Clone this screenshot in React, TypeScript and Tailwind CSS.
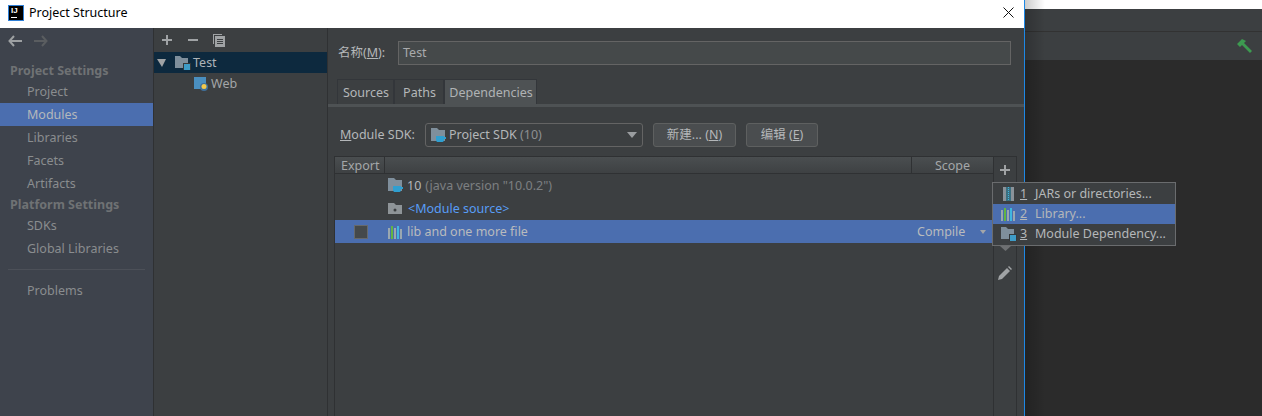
import React from 'react'

const ModuleFolderIcon = () => (
  <svg width="16" height="14" viewBox="0 0 16 14" className="shrink-0">
    <path d="M0 0h5l2 2h6v10H0z" fill="#7f8f9c" />
    <rect x="8" y="7" width="8" height="7" fill="#35383a" />
    <rect x="9" y="8" width="6" height="6" fill="#3e9cc7" />
  </svg>
)

const SdkIcon = () => (
  <svg width="16" height="15" viewBox="0 0 16 15" className="shrink-0">
    <path d="M0 0h6l2 2h6v11H0z" fill="#7f8f9c" />
    <path d="M5 8h8v4c0 1.500-1 2-2 2H7c-1 0-2-.5-2-2z" fill="#2f9fd0" />
    <path d="M13 9h2v2h-2z" fill="#2f9fd0" />
  </svg>
)

const LibraryIcon = () => (
  <svg width="15" height="14" viewBox="0 0 15 14" className="shrink-0">
    <rect x="0" y="3" width="2" height="11" fill="#9aa7b0" />
    <rect x="3" y="1" width="2" height="13" fill="#62b543" />
    <rect x="6" y="3" width="2" height="11" fill="#9aa7b0" />
    <rect x="9" y="1" width="2" height="13" fill="#40b6e0" />
    <rect x="12" y="4" width="2" height="10" fill="#9aa7b0" />
  </svg>
)

const Caret = ({ className = '' }: { className?: string }) => (
  <span className={`inline-block w-0 h-0 border-l-transparent border-r-transparent ${className}`} />
)

const NavItem = ({ label, active }: { label: string; active?: boolean }) => (
  <div className={`h-[23px] flex items-center pl-[27px] pt-[1px] text-[#8a8d8f] ${active ? 'bg-[#4b6eaf] text-[#b4b8bb]' : ''}`}>{label}</div>
)

const NavHead = ({ label, h }: { label: string; h: string }) => (
  <div className={`${h} flex items-center pl-[10px] font-bold text-[#6f7274]`}>{label}</div>
)

const Sidebar = () => (
  <div className="w-[153px] shrink-0 bg-[#3e434c] border-r border-[#2f3133] box-content">
    <div className="h-8 pb-[6px] flex items-center gap-[12px] pl-2">
      <svg width="14" height="12" viewBox="0 0 14 12"><path d="M6 1L1.500 6 6 11M2 6h12" fill="none" stroke="#9da0a2" strokeWidth="2" /></svg>
      <svg width="14" height="12" viewBox="0 0 14 12"><path d="M8 1l4.500 5L8 11M12 6H0" fill="none" stroke="#5a5d60" strokeWidth="2" /></svg>
    </div>
    <NavHead label="Project Settings" h="h-5 pt-[2px]" />
    <NavItem label="Project" />
    <NavItem label="Modules" active />
    <NavItem label="Libraries" />
    <NavItem label="Facets" />
    <NavItem label="Artifacts" />
    <NavHead label="Platform Settings" h="h-[19px] pt-[1px]" />
    <NavItem label="SDKs" />
    <NavItem label="Global Libraries" />
    <div className="h-[19px] flex items-center px-2">
      <div className="h-px w-full bg-[#4c5058]" />
    </div>
    <NavItem label="Problems" />
  </div>
)

const ModuleTree = () => (
  <div className="w-[173px] shrink-0 bg-[#3c3f41] border-r border-[#2f3133] box-content text-[#a9b7c6]">
    <div className="h-6 flex items-center gap-[14px] pl-[7px]">
      <svg width="12" height="12" viewBox="0 0 12 12"><path d="M5 1h2v4h4v2H7v4H5V7H1V5h4z" fill="#a0a3a5" /></svg>
      <svg width="12" height="12" viewBox="0 0 12 12"><path d="M1 5h10v2H1z" fill="#a0a3a5" /></svg>
      <svg width="12" height="13" viewBox="0 0 12 13"><path d="M0 0h9v1H1v9H0z" fill="#a0a3a5" /><path d="M2 2h10v11H2z" fill="#a0a3a5" /><path d="M4 5h6v1H4zM4 7h6v1H4zM4 9h6v1H4z" fill="#3c3f41" /></svg>
    </div>
    <div className="h-[21px] bg-[#0d293e] flex items-center pl-[3px] text-[#aeb4b8]">
      <Caret className="border-t-[8px] border-t-[#a0a3a5] border-l-[5px] border-r-[4px]" />
      <span className="ml-[9px] flex"><ModuleFolderIcon /></span>
      <span className="ml-[2px] pt-[2px]">Test</span>
    </div>
    <div className="h-[21px] flex items-center pl-[40px] text-[#a3a6a8]">
      <svg width="14" height="14" viewBox="0 0 14 14" className="shrink-0">
        <rect x="0" y="0" width="12" height="12" fill="#4a8fc0" />
        <circle cx="10" cy="10" r="4" fill="#3f6f9a" />
        <circle cx="10" cy="9.500" r="2.500" fill="#f2c94c" />
      </svg>
      <span className="ml-[3px] pt-[2px]">Web</span>
    </div>
  </div>
)

const Tab = ({ label, w, active }: { label: string; w: string; active?: boolean }) => (
  <div className={`${w} h-[25px] flex items-center justify-center pt-[2px] pl-[1px] border-t border-r border-l border-[#33363a] ${active ? 'bg-[#4e5254] text-[#b0b3b5]' : 'bg-[#3c3f41] text-[#b4b7b9]'}`}>{label}</div>
)

const DialogButton = ({ w, children }: { w: string; children: React.ReactNode }) => (
  <div className={`${w} h-6 flex items-center justify-center rounded-[3px] border border-[#5e6060] bg-[#4a4d4f] text-[#b4b7b9]`}>{children}</div>
)

const Row = ({ children, selected }: { children: React.ReactNode; selected?: boolean }) => (
  <div className={`h-[23px] flex items-center ${selected ? 'bg-[#4b6eaf]' : ''}`}>{children}</div>
)

const Dependencies = () => (
  <div className="flex-1 min-w-0 flex flex-col bg-[#3c3f41] text-[#afb1b3]">
    <div className="h-6 mt-[13px] shrink-0 flex items-center pl-[10px] pr-[13px]">
      <span className="w-[60px] text-[#b4b7b9]">名称(<span className="underline">M</span>):</span>
      <div className="flex-1 h-6 flex items-center pl-[4px] border border-[#646464] bg-[#45494a] text-[#a9abad]">Test</div>
    </div>
    <div className="flex pl-[9px] h-[25px] mt-[14px] shrink-0">
      <Tab label="Sources" w="w-[57px]" />
      <Tab label="Paths" w="w-[50px]" />
      <Tab label="Dependencies" w="w-[93px]" active />
    </div>
    <div className="h-[3px] shrink-0 bg-[#4e5254]" />
    <div className="h-[24px] mt-[16px] shrink-0 flex items-center pl-3">
      <span className="w-[85px] text-[#b4b7b9]"><span className="underline">M</span>odule SDK:</span>
      <div className="w-[218px] h-6 flex items-center pl-[5px] pr-[5px] rounded-[3px] border border-[#646464] bg-[#3c3f41]">
        <SdkIcon />
        <span className="ml-[2px] flex-1 text-[#b4b7b9]">Project SDK <span className="text-[#8c8f91]">(10)</span></span>
        <Caret className="border-t-[6px] border-t-[#9a9da0] border-l-[5px] border-r-[5px]" />
      </div>
      <div className="flex gap-[10px] ml-[10px]">
        <DialogButton w="w-[83px]">新建... (<span className="underline">N</span>)</DialogButton>
        <DialogButton w="w-[72px]">编辑 (<span className="underline">E</span>)</DialogButton>
      </div>
    </div>
    <div className="flex-1 mt-[9px] ml-[6px] mr-[7px] flex min-h-0 border-l border-t border-[#2f3133]">
      <div className="flex-1 min-w-0 flex flex-col">
        <div className="h-4 shrink-0 flex items-center bg-gradient-to-b from-[#4a4e50] to-[#3e4143] border-b border-[#2f3133] text-[#a4a7a9] box-content">
          <div className="w-[50px] h-full flex items-center pl-[6px] pt-[3px] border-r border-[#2f3133]">Export</div>
          <div className="flex-1 h-full border-r border-[#2f3133]" />
          <div className="w-[81px] text-center pt-[3px]">Scope</div>
        </div>
        <Row>
          <span className="ml-[53px]"><SdkIcon /></span>
          <span className="ml-[3px] pt-[1px] text-[#b4b7b9]">10</span>
          <span className="ml-1 pt-[1px] text-[#7c7f81]">(java version "10.0.2")</span>
        </Row>
        <Row>
          <span className="ml-[53px] flex">
            <svg width="15" height="13" viewBox="0 0 15 13"><path d="M0 1h6l2 2h6v9H0z" fill="#8e9498" /><circle cx="7" cy="8" r="1.500" fill="#3c3f41" /></svg>
          </span>
          <span className="ml-[5px] pt-[2px] text-[#589df6]">&lt;Module source&gt;</span>
        </Row>
        <Row selected>
          <span className="ml-[19px] w-[14px] h-[14px] bg-[#45494a] border border-[#66696b]" />
          <span className="ml-[20px] flex"><LibraryIcon /></span>
          <span className="ml-[4px] pt-[1px] flex-1 text-[#b9bbbd]">lib and one more file</span>
          <span className="w-[81px] pl-[5px] flex items-center text-[#b9bbbd]">
            <span className="w-[63px] pt-[1px]">Compile</span>
            <Caret className="border-t-[#a3a6a9] border-l-[3px] border-r-[3px] border-t-[4px]" />
          </span>
        </Row>
      </div>
      <div className="w-[24px] shrink-0 border-l border-r border-[#2f3133] flex flex-col items-center">
        <svg width="12" height="12" viewBox="0 0 12 12" className="mt-[7px]"><path d="M5 1h2v4h4v2H7v4H5V7H1V5h4z" fill="#a0a3a5" /></svg>
        <svg width="11" height="5" viewBox="0 0 11 5" className="mt-[70px]"><path d="M0 0h11L5.500 5z" fill="#6e7072" /></svg>
        <svg width="16" height="16" viewBox="0 0 16 16" className="mt-[14px]"><path d="M1 15l1-4 8-8 3 3-8 8zM11 2l1-1 3 3-1 1z" fill="#a0a3a5" /></svg>
      </div>
    </div>
  </div>
)

const PopupRow = ({ n, label, icon, pad, active }: { n: string; label: string; icon: React.ReactNode; pad: string; active?: boolean }) => (
  <div className={`h-[20px] flex items-center ${active ? 'bg-[#4b6eaf]' : ''}`}>
    <span className={`w-[27px] flex ${pad}`}>{icon}</span>
    <span className="underline w-[15px]">{n}</span>
    <span>{label}</span>
  </div>
)

const Popup = () => (
  <div className="absolute left-[992px] top-[182px] w-[184px] pt-[1px] pb-[1px] border border-[#6a6c6e] bg-[#3c3f41] text-[#b4b7b9]">
    <PopupRow
      n="1"
      label="JARs or directories..."
      pad="pl-[10px]"
      icon={
        <svg width="11" height="14" viewBox="0 0 11 14">
          <rect width="11" height="14" fill="#8a9299" />
          <rect x="3" width="5" height="14" fill="#3b6f80" />
          <path d="M5 0h1v1H5zM5 2h1v1H5zM5 4h1v1H5zM5 6h1v1H5zM5 8h1v1H5zM5 10h1v1H5zM5 12h1v1H5z" fill="#40b6e0" />
        </svg>
      }
    />
    <PopupRow n="2" label="Library..." pad="pl-[8px]" icon={<LibraryIcon />} active />
    <PopupRow n="3" label="Module Dependency..." pad="pl-[8px]" icon={<ModuleFolderIcon />} />
  </div>
)

const BackgroundWindow = () => (
  <div className="relative flex-1 min-w-0 bg-[#2b2b2b] flex flex-col">
    <div className="h-[9px] bg-white" />
    <div className="h-[22px] bg-[#3c3f41] border-b border-[#323232] box-content" />
    <div className="h-7 bg-[#3c3f41] flex items-center justify-end pr-[10px]">
      <svg width="15" height="14" viewBox="0 0 15 14">
        <path d="M0 5l5-5 4 2-2 2 8 8-2 2-8-8-2 2z" fill="#3d9a50" />
      </svg>
    </div>
    <div className="absolute inset-y-0 left-0 w-5 bg-gradient-to-r from-black/20 to-transparent" />
  </div>
)

export default function App() {
  return (
    <div className="relative w-[1262px] h-[416px] flex overflow-hidden text-[12.5px] leading-none [font-family:'Noto_Sans','Noto_Sans_CJK_SC',sans-serif]">
      <div className="w-[1024px] shrink-0 flex flex-col box-content border-r border-[#1e88e5]">
        <div className="h-7 shrink-0 bg-white flex items-center pb-[3px] pl-2 pr-[10px]">
          <div className="w-4 h-4 bg-black border border-[#2f7fd6] text-white text-[8px] font-bold pl-[2px] pt-[1px] leading-[8px] [font-family:'Liberation_Sans',sans-serif]">
            IJ
            <div className="w-[6px] h-px mt-[2px] bg-white" />
          </div>
          <span className="ml-[5px] pt-[1px] text-black">Project Structure</span>
          <svg width="11" height="11" viewBox="0 0 11 11" className="ml-auto"><path d="M.5.5l10 10M10.500.5l-10 10" stroke="#111" fill="none" /></svg>
        </div>
        <div className="flex-1 flex min-h-0">
          <Sidebar />
          <ModuleTree />
          <Dependencies />
        </div>
      </div>
      <BackgroundWindow />
      <Popup />
    </div>
  )
}
